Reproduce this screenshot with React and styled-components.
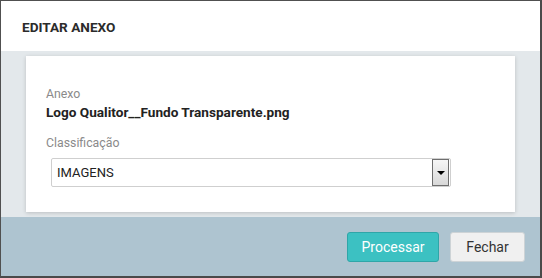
import React from "react";
import styled, { createGlobalStyle } from "styled-components";

const Global = createGlobalStyle`
  html, body { margin: 0; padding: 0; background: #ffffff; }
  body { font-family: Roboto, "Liberation Sans", Arial, sans-serif; }
  * { box-sizing: border-box; }
`;

const Modal = styled.div`
  width: 542px;
  height: 278px;
  display: flex;
  flex-direction: column;
  border-top: 1px solid #505050;
  border-left: 1px solid #505050;
  border-right: 2px solid #4a4a4a;
  border-bottom: 2px solid #4a4a4a;
  background: #ffffff;
`;

const Header = styled.div`
  height: 50px;
  display: flex;
  align-items: center;
  padding-left: 21px;
  padding-top: 1px;
  background: #ffffff;
`;

const Title = styled.h1`
  margin: 0;
  font-size: 13.6px;
  font-weight: 700;
  color: #2b2b2b;
`;

const Body = styled.div`
  flex: 1;
  background: #e3e8eb;
  padding: 5px 25px;
  display: flex;
`;

const Card = styled.div`
  flex: 1;
  background: #ffffff;
  box-shadow: 0 1px 4px rgba(0, 0, 0, 0.18);
  padding: 30px 20px 0 20px;
  display: flex;
  flex-direction: column;
`;

const Label = styled.div`
  font-size: 12.3px;
  line-height: 16px;
  color: #8a8a8a;
  margin-top: ${(p) => p.$mt || 0}px;
`;

const Value = styled.div`
  margin-top: 1px;
  font-size: 13.6px;
  line-height: 18px;
  font-weight: 700;
  color: #222;
`;

const Select = styled.div`
  margin-top: 7px;
  margin-left: 5px;
  width: 400px;
  height: 29px;
  border: 1px solid #cfcfcf;
  border-radius: 2px;
  display: flex;
  align-items: center;
  justify-content: space-between;
  padding: 0 1px 0 5px;
  font-size: 13px;
  color: #222;
`;

const DropButton = styled.div`
  width: 17px;
  height: 27px;
  border: 1px solid #6e6e6e;
  background: linear-gradient(#f6f6f6, #d8d8d8);
  display: flex;
  align-items: center;
  justify-content: center;
`;

const Arrow = styled.span`
  width: 0;
  height: 0;
  border-left: 4px solid transparent;
  border-right: 4px solid transparent;
  border-top: 4px solid #000;
`;

const Footer = styled.div`
  height: 59px;
  background: #aec4d0;
  display: flex;
  justify-content: flex-end;
  align-items: flex-start;
  gap: 11px;
  padding: 15px 15px 0 0;
`;

const Button = styled.button`
  width: ${(p) => p.$w}px;
  height: 30px;
  border-radius: 3px;
  font-family: Roboto, "Liberation Sans", Arial, sans-serif;
  font-size: 14px;
  cursor: pointer;
  background: ${(p) => (p.$primary ? "#3cc1c2" : "#f0f0f0")};
  border: 1px solid ${(p) => (p.$primary ? "#2fa6a8" : "#cdd3d6")};
  color: ${(p) => (p.$primary ? "#ffffff" : "#333333")};
  padding: 0;
`;

export default function App() {
  return (
    <>
      <Global />
      <Modal>
        <Header>
          <Title>EDITAR ANEXO</Title>
        </Header>
        <Body>
          <Card>
            <Label>Anexo</Label>
            <Value>Logo Qualitor__Fundo Transparente.png</Value>
            <Label $mt={14}>Classificação</Label>
            <Select>
              <span>IMAGENS</span>
              <DropButton>
                <Arrow />
              </DropButton>
            </Select>
          </Card>
        </Body>
        <Footer>
          <Button $primary $w={92}>Processar</Button>
          <Button $w={75}>Fechar</Button>
        </Footer>
      </Modal>
    </>
  );
}
